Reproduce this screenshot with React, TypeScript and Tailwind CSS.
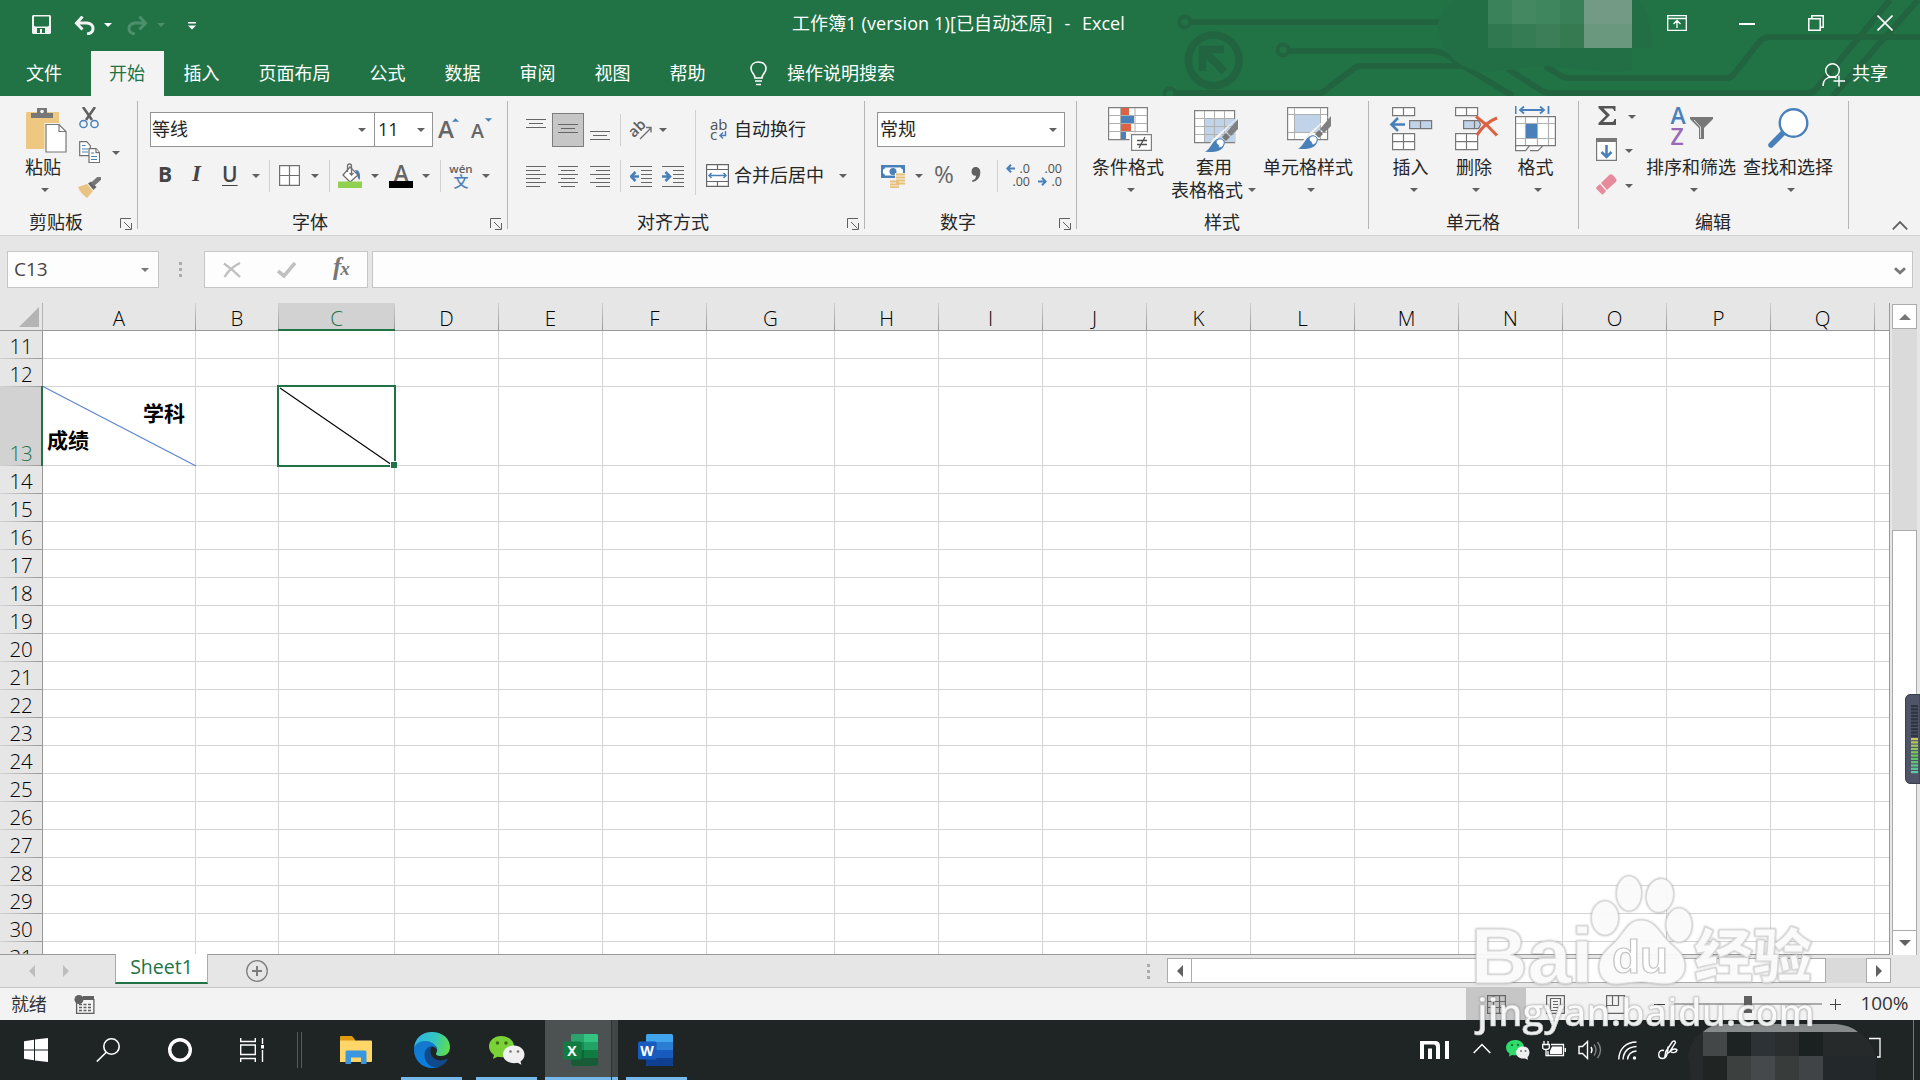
import type { ReactNode } from "react";
import clsx from "clsx";

const columns = [
  { name: "A", cls: "w-[153px]" },
  { name: "B", cls: "w-[83px]" },
  { name: "C", cls: "w-[116px]" },
  { name: "D", cls: "w-[104px]" },
  { name: "E", cls: "w-[104px]" },
  { name: "F", cls: "w-[104px]" },
  { name: "G", cls: "w-[128px]" },
  { name: "H", cls: "w-[104px]" },
  { name: "I", cls: "w-[104px]" },
  { name: "J", cls: "w-[104px]" },
  { name: "K", cls: "w-[104px]" },
  { name: "L", cls: "w-[104px]" },
  { name: "M", cls: "w-[104px]" },
  { name: "N", cls: "w-[104px]" },
  { name: "O", cls: "w-[104px]" },
  { name: "P", cls: "w-[104px]" },
  { name: "Q", cls: "w-[104px]" },
];

const rows = Array.from({ length: 21 }, (_, i) => i + 11);

const tabs = ["插入", "页面布局", "公式", "数据", "审阅", "视图", "帮助"];

function Caret({ className }: { className?: string }) {
  return (
    <svg viewBox="0 0 8 4" className={clsx("h-1 w-2 shrink-0 fill-current", className ?? "text-[#606060]")}>
      <path d="M0 0h8L4 4z" />
    </svg>
  );
}

function Launcher() {
  return (
    <svg viewBox="0 0 12 12" className="h-3 w-3 shrink-0" fill="none" stroke="#606060">
      <path d="M.5 10V.5H11M4 4l6.5 6.5M11.5 5v6.5H5" />
    </svg>
  );
}

function Divider({ className }: { className?: string }) {
  return <span className={clsx("w-px shrink-0 bg-[#d0d0d0]", className)} />;
}

/* ---------- Title bar and tabs ---------- */

function Circuit() {
  return (
    <svg viewBox="0 0 800 96" className="absolute top-0 right-0 h-24 w-[800px]" fill="none">
      <g stroke="#226440" strokeWidth="6">
        <path d="M71 22h260" />
        <path d="M169 51h143c14 0 22 10 36 18l45 27" />
        <path d="M57 93h142c4 0 6-2 9-5l24-18q5-4 9-4h132c11 0 14 2 21 7l28 18q4 2 8 2h259q4 0 7-4L770 0" />
        <path d="M425 66l18 11q3 1 6 1h157q5 0 8-4l26-33q4-4 9-4h151" />
        <path d="M713 96L798 0" />
      </g>
      <g stroke="#226440">
        <circle cx="64.700" cy="22" r="5.500" strokeWidth="4" />
        <circle cx="163" cy="50" r="5.500" strokeWidth="4" />
        <circle cx="50" cy="94" r="5.500" strokeWidth="4" />
        <circle cx="93.700" cy="60.300" r="25.400" strokeWidth="7.500" />
        <path d="M104 49.500H82.500V71M84 51l20.500 20.500" strokeWidth="7.500" />
      </g>
      <path d="M318 24c2-10 8-18 16-24h184c10 8 16 30 13 48h-19v22c-20 4-50-1-72-3-30-4-40 3-62 4-30 5-60-14-60-47z" fill="#226f45" />
      <path d="M368 0h24v24h-24z" fill="#3a835a" />
      <path d="M392 0h24v24h-24z" fill="#438860" />
      <path d="M416 0h24v24h-24z" fill="#3f855d" />
      <path d="M440 0h24v24h-24z" fill="#397f57" />
      <path d="M368 24h24v24h-24z" fill="#2f7850" />
      <path d="M392 24h24v24h-24z" fill="#357b54" />
      <path d="M416 24h24v24h-24z" fill="#3b7e58" />
      <path d="M440 24h24v24h-24z" fill="#357a50" />
      <path d="M464 0h48v24h-48z" fill="#739a84" />
      <path d="M464 24h48v24h-48z" fill="#69987f" />
    </svg>
  );
}

function TitleBar() {
  return (
    <div className="relative flex h-[51px] items-start text-white">
      <svg viewBox="0 0 19 19" className="mt-[15px] ml-8 h-[19px] w-[19px]">
        <path fill="#f2f2f2" fillRule="evenodd" d="M0 1l1-1h17l1 1v17l-1 1H1l-1-1zM2 1.500v9l1 1h13l1-1v-9zM5 13v5h3v-4h2v4h3v-5z" />
      </svg>
      <svg viewBox="0 0 21 19" className="mt-4 ml-[23px] h-[19px] w-[21px]" fill="none" stroke="#f2f2f2" strokeWidth="3">
        <path d="M8.500 .500L2.500 7.200l6 6.300M2.500 7H13c8 1 8 10 0 11" />
      </svg>
      <Caret className="mt-[23px] ml-[9px] text-white" />
      <svg viewBox="0 0 21 19" className="mt-4 ml-[15px] h-[19px] w-[21px]" fill="none" stroke="#4c8f6b" strokeWidth="3">
        <path d="M12.500 .500l6 6.700-6 6.300M18.500 7H8C0 8 0 17 8 18" />
      </svg>
      <Caret className="mt-[23px] ml-[9px] text-[#4c8f6b]" />
      <svg viewBox="0 0 8 8" className="mt-[22px] ml-[23px] h-2 w-2" fill="#fff">
        <path d="M0 0h8v1.500H0zM0 3.500h8l-4 4z" />
      </svg>
      <div className="mt-[10px] ml-[596px] flex w-[335px] text-[18px] leading-[27px] whitespace-pre">
        <span className="w-[261px] tracking-[0.12px]">工作簿1 (version 1)[已自动还原]</span>
        <span className="w-[29px] text-center">-</span>
        <span>Excel</span>
      </div>
      <svg viewBox="0 0 20 16" className="mt-[15px] ml-[540px] h-4 w-5" fill="none" stroke="#fff" strokeWidth="1.300">
        <path d="M.7.700h18.600v14.600H.7zM.7 3.500h18.600M10 13V6M6.500 9L10 5.500 13.500 9" />
      </svg>
      <span className="mt-[23px] ml-[52px] h-[2px] w-4 bg-white" />
      <svg viewBox="0 0 16 16" className="mt-[15px] ml-[53px] h-4 w-4" fill="none" stroke="#fff" strokeWidth="1.500">
        <path d="M.8 3.800h11.400v11.400H.8zM3.800 3.500V.8h11.400v11.400h-3" />
      </svg>
      <svg viewBox="0 0 16 16" className="mt-[15px] ml-[53px] h-4 w-4" fill="none" stroke="#fff" strokeWidth="1.600">
        <path d="M.5.500l15 15M15.500.500l-15 15" />
      </svg>
    </div>
  );
}

function TabStrip() {
  return (
    <div className="relative flex h-[45px] items-center pb-px text-[18px] text-white">
      <span className="w-[91px] pl-[26px]">文件</span>
      <span className="-mb-px flex h-[45px] w-[73px] items-center justify-center bg-[#f3f3f3] pr-px pb-px text-[#217346]">开始</span>
      {tabs.map((tab) => (
        <span key={tab} className="px-[19.5px]">
          {tab}
        </span>
      ))}
      <svg viewBox="0 0 17 25" className="ml-[25px] h-[25px] w-[17px]" fill="none" stroke="#fff" strokeWidth="1.600">
        <path d="M5 17c0-4-4-5-4-9.500C1 3.500 4 1 8.500 1S16 3.500 16 7.500c0 4.500-4 5.500-4 9.500zM5 20h7M6 23.500h5" />
      </svg>
      <span className="ml-5">操作说明搜索</span>
      <svg viewBox="0 0 23 24" className="mt-1 ml-[927px] h-6 w-[23px]" fill="none" stroke="#fff" strokeWidth="1.400">
        <circle cx="10.500" cy="7.500" r="6.800" />
        <path d="M1 23c0-6 4-9 9.500-9 2 0 3 .500 4 1M17 12.500v11M11.500 18H23" />
      </svg>
      <span className="ml-[7px]">共享</span>
    </div>
  );
}

/* ---------- Ribbon ---------- */

function Group({ className, label, labelClass, launcher, children }: {
  className: string;
  label: string;
  labelClass: string;
  launcher?: boolean;
  children: ReactNode;
}) {
  return (
    <section className={clsx("flex h-full shrink-0", className)}>
      <div className="flex min-w-0 flex-1 flex-col">
        <div className="flex h-[112px] items-start">{children}</div>
        <div className="flex h-[27px] items-start">
          <span className={clsx("leading-[28px]", labelClass)}>{label}</span>
          {launcher && (
            <span className="mt-[10px] mr-[5px] ml-auto">
              <Launcher />
            </span>
          )}
        </div>
      </div>
      <span className="mt-[5px] h-32 w-px bg-[#b5b5b5]" />
    </section>
  );
}

function BigButton({ className, icon, label, caretClass, labelClass }: {
  className: string;
  icon: ReactNode;
  label: string;
  caretClass?: string;
  labelClass?: string;
}) {
  return (
    <div className={clsx("flex shrink-0 flex-col items-center", className)}>
      <div className="flex h-12 items-start">{icon}</div>
      <span className={clsx("leading-6 whitespace-nowrap", labelClass)}>{label}</span>
      <span className={clsx("mt-[9px] flex", caretClass)}>
        <Caret />
      </span>
    </div>
  );
}

function Clipboard() {
  return (
    <Group className="w-[138px]" label="剪贴板" labelClass="ml-[29px]" launcher>
      <BigButton
        className="mt-[11px] ml-[25px] w-[42px]"
        label="粘贴"
        labelClass="mr-[6px]"
        caretClass="mr-[2px]"
        icon={
          <svg viewBox="0 0 42 46" className="h-[46px] w-[42px]">
            <rect x="1" y="5" width="33" height="37" rx="1" fill="#eec880" />
            <path d="M6 11V6h6V1h10v5h6v5z" fill="#777" />
            <circle cx="17" cy="4.500" r="1.800" fill="#f3f3f3" />
            <path d="M19.500 16h15l7.500 7.500V46H19.500z" fill="#f3f3f3" />
            <path d="M21 17.500h13l7 7V45H21z" fill="#fff" stroke="#777" strokeWidth="1.200" />
            <path d="M34 17.500v7h7" fill="none" stroke="#777" strokeWidth="1.200" />
          </svg>
        }
      />
      <div className="mt-[11px] ml-3 flex flex-col">
        <svg viewBox="0 0 20 22" className="h-[22px] w-5" fill="none">
          <path d="M4 0l9 13M16 0L7 13" stroke="#606060" strokeWidth="2.600" />
          <circle cx="4.500" cy="17" r="3.600" stroke="#4a80ba" strokeWidth="1.500" />
          <circle cx="15.500" cy="17" r="3.600" stroke="#4a80ba" strokeWidth="1.500" />
        </svg>
        <div className="mt-3 flex items-center">
          <svg viewBox="0 0 21 22" className="h-[22px] w-[21px]" fill="#fff" stroke="#707070" strokeWidth="1.200">
            <path d="M.7.700h7l3.600 4v10H.7z" />
            <path d="M3 4.500h3.500M3 8h6M3 11h6" stroke="#4a80ba" />
            <path d="M10 7.700h7l3.600 4v10H10z" />
            <path d="M17 7.700v4h3.600" />
            <path d="M12 12h3M12 15.500h6M12 18.500h6" stroke="#4a80ba" />
          </svg>
          <Caret className="mt-[2px] ml-[12px] text-[#606060]" />
        </div>
        <svg viewBox="0 0 24 21" className="mt-[14px] -ml-[2px] h-[21px] w-6">
          <path d="M1 10l9-3 6 7-6 7C6 18 3 15 1 10z" fill="#e9c382" />
          <path d="M11 6.500l3-2 5.500 5.500-3 3z" fill="#666" />
          <path d="M17 6l5-4.500" stroke="#777" strokeWidth="4.500" strokeLinecap="round" />
        </svg>
      </div>
    </Group>
  );
}

function FontGroup() {
  return (
    <Group className="w-[370px]" label="字体" labelClass="ml-[154px]" launcher>
      <div className="flex flex-col">
        <div className="mt-4 ml-3 flex h-[35px] items-start">
          <div className="flex h-[35px] w-[225px] items-center justify-between border border-[#939393] bg-white pr-2 pl-px text-[18px]">
            <span className="leading-[27px]">等线</span>
            <Caret />
          </div>
          <div className="-ml-px flex h-[35px] w-[59px] items-center justify-between border border-[#939393] bg-white pr-[7px] pl-[3px] text-[18px]">
            <span>11</span>
            <Caret />
          </div>
          <span className="mt-[5px] ml-[5px] w-4 text-[24px] leading-6 font-semibold text-[#666]">A</span>
          <svg viewBox="0 0 8 4" className="mt-[6px] -ml-[2px] h-1 w-[7px]" fill="#4a80ba"><path d="M0 4h8L4 0z" /></svg>
          <span className="mt-[7px] ml-[12px] w-[13px] text-[19.5px] leading-6 font-semibold text-[#666]">A</span>
          <svg viewBox="0 0 8 4" className="mt-[6px] ml-px h-1 w-[7px]" fill="#4a80ba"><path d="M0 0h8L4 4z" /></svg>
        </div>
        <div className="mt-[13px] flex h-8 items-center pl-[20px] text-[21px] text-[#444]">
          <span className="-mt-[3px] w-8 font-bold">B</span>
          <span className="-mt-[3px] w-8 pl-[2px] font-['Liberation_Serif',serif] text-[23px] font-bold italic">I</span>
          <span className="-mt-[3px] w-[15px] font-semibold underline decoration-1 underline-offset-[3px]">U</span>
          <Caret className="ml-[15px] text-[#606060]" />
          <Divider className="ml-[9px] h-8" />
          <svg viewBox="0 0 21 21" className="-mt-[2px] ml-[9px] h-[21px] w-[21px]" fill="#fff" stroke="#707070" strokeWidth="1.200">
            <path d="M.6.600h19.800v19.800H.6zM10.500.600v19.800M.6 10.500h19.800" />
          </svg>
          <Caret className="ml-[11px] text-[#606060]" />
          <Divider className="ml-[10px] h-8" />
          <svg viewBox="0 0 24 25" className="-mt-px ml-2 h-[25px] w-6">
            <path d="M17 7c5-1 6 6 4.500 10-2-1-2-6-4.500-10z" fill="#4a80ba" />
            <path d="M12 4l8 8-8 7-7-7z" fill="#fff" stroke="#707070" strokeWidth="1.300" />
            <path d="M9.500 9V3q0-2 2-2t2 2v8M11.500 10l2 2 2-2" fill="none" stroke="#707070" strokeWidth="1.300" />
            <path d="M0 18.500h24V25H0z" fill="#92d050" />
          </svg>
          <Caret className="ml-[9px] text-[#606060]" />
          <span className="-mt-[1px] ml-[10px] flex h-[25px] w-6 flex-col items-center text-[23px] leading-[21px] font-semibold text-[#666]">
            <span className="h-[18px]">A</span>
            <span className="h-[7px] w-6 shrink-0 bg-black" />
          </span>
          <Caret className="ml-[9px] text-[#606060]" />
          <Divider className="ml-[10px] h-8" />
          <span className="-mt-[2px] ml-[10px] flex w-5 flex-col items-center leading-[13px]">
            <span className="text-[11.5px] leading-[11px] font-semibold text-[#606060]">wén</span>
            <span className="text-[15px] leading-[14px] font-medium text-[#4a80ba]">文</span>
          </span>
          <Caret className="ml-[11px] text-[#606060]" />
        </div>
      </div>
    </Group>
  );
}

function Lines({ className, d }: { className?: string; d: string }) {
  return (
    <svg viewBox="0 0 20 22" className={clsx("h-[22px] w-5 shrink-0", className)} stroke="#666" strokeWidth="1.100">
      <path d={d} />
    </svg>
  );
}

function AlignmentGroup() {
  return (
    <Group className="w-[357px]" label="对齐方式" labelClass="ml-[129px]" launcher>
      <div className="mt-4 ml-[12px] flex w-[176px] flex-col">
        <div className="flex h-[35px] items-center">
          <Lines className="ml-[6px]" d="M0 .500h20M3 4.500h14M0 8.500h20" />
          <span className="ml-[6px] flex h-[34px] w-8 items-center justify-center border border-[#7d7d7d] bg-[#c6c6c6]">
            <Lines d="M0 5.500h20M3 9.500h14M0 13.500h20" />
          </span>
          <Lines className="ml-[6px]" d="M0 12.500h20M3 16.500h14M0 20.500h20" />
          <Divider className="ml-[10px] h-8" />
          <svg viewBox="0 0 22 22" className="ml-[10px] h-[22px] w-[22px] overflow-visible">
            <text x="-2" y="13" transform="rotate(-45 8 10)" fontSize="15" fontWeight="600" fill="#606060">ab</text>
            <path d="M9 20L20 9M20 13.500V8.500h-5" fill="none" stroke="#707070" strokeWidth="1.400" />
          </svg>
          <Caret className="ml-[6px] text-[#606060]" />
        </div>
        <div className="mt-[13px] flex h-8 items-center">
          <Lines className="-mt-[1px] ml-[6px]" d="M0 1.500h20M0 5.500h14M0 9.500h20M0 13.500h14M0 17.500h20M0 21.500h14" />
          <Lines className="-mt-[1px] ml-3" d="M0 1.500h20M3 5.500h14M0 9.500h20M3 13.500h14M0 17.500h20M3 21.500h14" />
          <Lines className="-mt-[1px] ml-3" d="M0 1.500h20M6 5.500h14M0 9.500h20M6 13.500h14M0 17.500h20M6 21.500h14" />
          <Divider className="ml-[10px] h-8" />
          <svg viewBox="0 0 22 22" className="-mt-[1px] ml-[9px] h-[22px] w-[22px]" fill="none" stroke="#666" strokeWidth="1.100">
            <path d="M0 1.500h22M11 5.500h11M11 9.500h11M11 13.500h11M11 17.500h11M0 21.500h22" />
            <path d="M9 11.500H2M5.500 7L1 11.500 5.500 16" stroke="#4a80ba" strokeWidth="2.600" />
          </svg>
          <svg viewBox="0 0 22 22" className="-mt-[1px] ml-[10px] h-[22px] w-[22px]" fill="none" stroke="#666" strokeWidth="1.100">
            <path d="M0 1.500h22M11 5.500h11M11 9.500h11M11 13.500h11M11 17.500h11M0 21.500h22" />
            <path d="M0 11.500h7M3.500 7L8 11.500 3.500 16" stroke="#4a80ba" strokeWidth="2.600" />
          </svg>
        </div>
      </div>
      <Divider className="mt-[14px] -ml-[1px] h-[85px]" />
      <div className="mt-4 ml-[10px] flex flex-col">
        <div className="flex h-[35px] items-center">
          <svg viewBox="0 0 20 24" className="ml-[3px] h-6 w-5">
            <text x="1" y="11.5" fontSize="15" fill="#505050">ab</text>
            <text x="1" y="21.5" fontSize="15" fill="#505050">c</text>
            <path d="M16.500 13v4.500h-5M14 14.500l-3 3 3 3" fill="none" stroke="#4a80ba" strokeWidth="1.500" />
          </svg>
          <span className="ml-[5px]">自动换行</span>
        </div>
        <div className="mt-[13px] flex h-8 items-center">
          <svg viewBox="0 0 23 23" className="-mt-[2px] h-[23px] w-[23px]" fill="#fff" stroke="#666" strokeWidth="1.200">
            <path d="M.6.600h21.800v21.800H.6zM.6 5.500h21.800M.6 17.500h21.800M11.500.600v5M11.500 17.500v5" />
            <path d="M3 11.500h17M5.500 9L3 11.500 5.500 14M17.500 9l2.500 2.500-2.500 2.500" fill="none" stroke="#4a80ba" strokeWidth="1.500" />
          </svg>
          <span className="-mt-px ml-[5px]">合并后居中</span>
          <Caret className="ml-[15px] text-[#606060]" />
        </div>
      </div>
    </Group>
  );
}

function NumberGroup() {
  return (
    <Group className="w-[212px]" label="数字" labelClass="ml-[75px]" launcher>
      <div className="flex flex-col">
        <div className="mt-4 ml-3 flex h-[35px] w-[188px] items-center justify-between border border-[#939393] bg-white pr-[7px] pl-[2px]">
          <span className="leading-[27px]">常规</span>
          <Caret />
        </div>
        <div className="mt-[13px] flex h-8 items-center pl-4">
          <svg viewBox="0 0 24 24" className="h-6 w-6">
            <path d="M0 1h24v13H0z" fill="#4a80ba" />
            <path d="M4 3.500h16q0 2 2 2v4q-2 0-2 2H4q0-2-2-2v-4q2 0 2-2z" fill="#fff" />
            <circle cx="12" cy="7.500" r="3.500" fill="#4a80ba" />
            <path d="M14 9h10v12H14zM8 16h9v7H8z" fill="#f3f3f3" />
            <path d="M15 10.500h9M15 13.500h9M15 16.500h9M15 19.500h9M9 17.500h9M9 20.500h9M9 23.200h9" stroke="#e9c07a" strokeWidth="2" />
          </svg>
          <Caret className="ml-[10px] text-[#606060]" />
          <span className="-mt-1 ml-[11px] w-[22px] text-[24px] text-[#666]">%</span>
          <svg viewBox="0 0 10 15" className="-mt-[3px] ml-[15px] h-[15px] w-[10px]" fill="#606060">
            <path d="M4.500 0C8 0 9.500 2.500 9.300 6 9 11 6 14 1.500 15l-.5-1.500C4 12.500 5 11 5 8.700 2 9 .500 7 .500 4.500.500 2 2.300 0 4.500 0z" />
          </svg>
          <Divider className="ml-[16px] h-8" />
          <span className="-mt-[2px] ml-[8px] flex w-6 flex-col text-right text-[12.5px] leading-[13px] font-medium text-[#505050]">
            <span className="flex items-center justify-between">
              <svg viewBox="0 0 9 9" className="h-[9px] w-[9px]" fill="none" stroke="#4a80ba" strokeWidth="2"><path d="M9 4.500H1.500M5 .800L1.300 4.500 5 8.200" /></svg>
              .0
            </span>
            <span>.00</span>
          </span>
          <span className="-mt-[2px] ml-2 flex w-6 flex-col text-right text-[12.5px] leading-[13px] font-medium text-[#505050]">
            <span>.00</span>
            <span className="flex items-center justify-between">
              <svg viewBox="0 0 9 9" className="h-[9px] w-[9px]" fill="none" stroke="#4a80ba" strokeWidth="2"><path d="M0 4.500h7.500M4 .800l3.700 3.700L4 8.200" /></svg>
              .0
            </span>
          </span>
        </div>
      </div>
    </Group>
  );
}

function Brush() {
  return (
    <g>
      <path d="M43 9L24 29l-8 13-6 1 10-14z" fill="#f3f3f3" />
      <path d="M11 42.500c6-2 7-12 14-13 5 0 7 5 4 9-4 5-12 5-18 4z" fill="#4a80ba" />
      <path d="M22 34c0-4 5-6 8-2 1 4-2 7-5 7 0-2-1-4-3-5z" fill="#fff" stroke="#4a80ba" />
      <path d="M28 28l4-4 4 4-4 4z" fill="#777" />
      <path d="M33 23l11-13v10l-7 7z" fill="#808080" />
    </g>
  );
}

function StylesGroup() {
  return (
    <Group className="w-[292px]" label="样式" labelClass="ml-[127px]">
      <BigButton
        className="mt-[11px] ml-[15px] w-[72px]"
        label="条件格式"
        caretClass="ml-[6px]"
        icon={
          <svg viewBox="0 0 44 44" className="ml-1 h-11 w-11">
            <path d="M.6.600h38.800v32H.6z" fill="#fff" stroke="#808080" strokeWidth="1.200" />
            <path d="M12.500 1v31M27 1v31M1 8.500h38M1 16.500h38M1 24.500h38" stroke="#b0b0b0" fill="none" />
            <path d="M13 1h8v7h-8zM13 17h10v7H13z" fill="#db6245" />
            <path d="M13 9h13v7H13zM13 25h5v7h-5z" fill="#4a80ba" />
            <path d="M21.500 25.500H44V44H21.500z" fill="#f3f3f3" />
            <path d="M23.600 27.600h19.800v15.800H23.600z" fill="#fff" stroke="#808080" strokeWidth="1.200" />
            <path d="M29 33.500h10M29 37.500h10M37 30l-6 11" stroke="#505050" strokeWidth="1.300" />
          </svg>
        }
      />
      <div className="mt-[11px] ml-[7px] flex w-[88px] flex-col">
        <svg viewBox="0 0 45 48" className="ml-[23px] h-12 w-[45px]">
          <path d="M.6 3.600h40v32H.6z" fill="#fff" stroke="#808080" strokeWidth="1.200" />
          <path d="M11 12h30v23H11z" fill="#c0d3e9" />
          <path d="M10.500 4v31M20.500 4v31M30.500 4v31M1 11.500h39M1 19.500h39M1 27.500h39" stroke="#b0b0b0" fill="none" />
          <g transform="translate(0 2)"><Brush /></g>
        </svg>
        <span className="ml-[25px] leading-6">套用</span>
        <span className="mt-[-1px] flex items-center leading-6 whitespace-nowrap">
          表格格式
          <Caret className="ml-[5px] text-[#606060]" />
        </span>
      </div>
      <BigButton
        className="mt-[11px] ml-[4px] w-[90px]"
        label="单元格样式"
        caretClass="ml-[6px]"
        icon={
          <svg viewBox="0 0 45 45" className="ml-[3px] h-[45px] w-[45px]">
            <path d="M.6.600h40v32H.6z" fill="#fff" stroke="#808080" strokeWidth="1.200" />
            <path d="M8 8h25v18H8z" fill="#c0d3e9" />
            <path d="M7.500 1v31M33.500 1v31M1 7.500h39M1 25.500h39" stroke="#b0b0b0" fill="none" />
            <g transform="translate(0 -1)"><Brush /></g>
          </svg>
        }
      />
    </Group>
  );
}

function CellsGroup() {
  return (
    <Group className="w-[210px]" label="单元格" labelClass="ml-[77px]">
      <BigButton
        className="mt-[11px] ml-[20px] w-[44px]"
        label="插入"
        labelClass="mr-px"
        caretClass="ml-[5px]"
        icon={
          <svg viewBox="0 0 44 44" className="h-11 w-11" fill="#fff" stroke="#777" strokeWidth="1.200">
            <path d="M3.600.600h22v8h-22zM14.500.600v8M3.600 26.600h22v16h-22zM14.500 26.600v16M3.600 34.600h22" />
            <path d="M20.600 13.600h22v8h-22zM31.500 13.600v8" fill="#c0d3e9" />
            <path d="M16 17.500H2M9 11l-6.500 6.500L9 24" fill="none" stroke="#4a80ba" strokeWidth="2.600" />
          </svg>
        }
      />
      <BigButton
        className="mt-[11px] ml-[22px] w-[44px]"
        label="删除"
        labelClass="mr-[6px]"
        caretClass="mr-[2px]"
        icon={
          <svg viewBox="0 0 44 44" className="h-11 w-11" fill="#fff" stroke="#777" strokeWidth="1.200">
            <path d="M.6.600h22v8h-22zM11.500.600v8M.6 26.600h22v16h-22zM11.500 26.600v16M.6 34.600h22" />
            <path d="M8.600 13.600h15l2 4-2 4h-15zM19.500 13.600v8" fill="#c0d3e9" />
            <path d="M21 9.500c7 5 14 11 21 19M42 11c-8 3-15 9-20 17" fill="none" stroke="#db6245" strokeWidth="3.200" />
          </svg>
        }
      />
      <BigButton
        className="mt-[10px] ml-[16px] w-[41px]"
        label="格式"
        labelClass="mt-px"
        caretClass="ml-[5px]"
        icon={
          <svg viewBox="0 0 41 46" className="h-[46px] w-[41px]" fill="#fff" stroke="#777" strokeWidth="1.200">
            <path d="M.6 10.600h39.800v29H.6zM.6 39.600v5h10l4-5M15 44.600h8l5-5" />
            <path d="M10.500 11v28M22.500 11v28M33.500 11v28M1 17.500h39M1 32.500h39" stroke="#b0b0b0" />
            <path d="M11 18h11v14H11z" fill="#4a80ba" stroke="none" />
            <path d="M.6 0v8M33.500 0v8M5 4h24M9 .500L5 4l4 3.500M25 .500L29 4l-4 3.500" fill="none" stroke="#4a80ba" strokeWidth="1.800" />
          </svg>
        }
      />
    </Group>
  );
}

function EditingGroup() {
  return (
    <Group className="w-[270px]" label="编辑" labelClass="ml-[116px]">
      <div className="mt-[10px] ml-[17px] flex w-[41px] flex-col">
        <div className="flex items-center">
          <svg viewBox="0 0 18 19" className="ml-[2px] h-[19px] w-[18px]" fill="#555">
            <path d="M.5 0h17v5h-1.500c-.3-2-1-2.500-3-2.500H5.500L12 9l-7 7h8c2 0 3-.5 3.500-3H18v6H.5v-2L8 9.500.500 2z" />
          </svg>
          <Caret className="mt-[3px] ml-[12px] text-[#606060]" />
        </div>
        <div className="mt-[13px] flex items-center">
          <svg viewBox="0 0 21 23" className="h-[23px] w-[21px]">
            <path d="M.6.600h19.800v21.800H.6z" fill="#fff" stroke="#777" strokeWidth="1.200" />
            <path d="M0 0h21v4H0z" fill="#777" />
            <path d="M10.500 7v12M5.500 14l5 5 5-5" fill="none" stroke="#4a80ba" strokeWidth="2.600" />
          </svg>
          <Caret className="mt-[3px] ml-2 text-[#606060]" />
        </div>
        <div className="mt-[13px] flex items-center">
          <svg viewBox="0 0 21 21" className="h-[21px] w-[21px]" fill="#e68a9c">
            <path d="M13.500.800q1.500-1.200 3 0l3.500 4q1 1.500 0 3L11 16 5 9zM4 10l6 7-2.500 3q-1 .800-2 0l-5-5q-.8-1.200 0-2z" />
          </svg>
          <Caret className="mt-[2px] ml-2 text-[#606060]" />
        </div>
      </div>
      <BigButton
        className="mt-[11px] ml-[9px] w-[90px]"
        label="排序和筛选"
        caretClass="ml-[6px]"
        icon={
          <svg viewBox="0 0 42 44" className="ml-[2px] h-11 w-[42px] overflow-visible">
            <text x="-.5" y="17" fontSize="23" fontWeight="600" fill="#4a80ba">A</text>
            <text x="-.5" y="38" fontSize="23" fontWeight="600" fill="#9a68b8">Z</text>
            <path d="M19 10h23v2l-9 9v11h-5V21l-9-9z" fill="#777" />
            <path d="M23 13l6.500 7v11" stroke="#ddd" fill="none" />
          </svg>
        }
      />
      <BigButton
        className="mt-[11px] ml-[7px] w-[90px]"
        label="查找和选择"
        caretClass="ml-[6px]"
        icon={
          <svg viewBox="0 0 41 42" className="h-[42px] w-[41px]">
            <path d="M3 38l14-14" stroke="#4a80ba" strokeWidth="5.500" strokeLinecap="round" />
            <circle cx="25.500" cy="16" r="13.800" fill="#fff" stroke="#4a80ba" strokeWidth="2.400" />
          </svg>
        }
      />
    </Group>
  );
}

function Ribbon() {
  return (
    <div className="flex h-[140px] border-b border-[#d2d2d2] bg-[#f3f3f3] text-[18px] text-[#262626]">
      <Clipboard />
      <FontGroup />
      <AlignmentGroup />
      <NumberGroup />
      <StylesGroup />
      <CellsGroup />
      <EditingGroup />
      <svg viewBox="0 0 16 9" className="mt-[125px] ml-[43px] h-[9px] w-4" fill="none" stroke="#606060" strokeWidth="1.800">
        <path d="M.8 8.300L8 1l7.200 7.300" />
      </svg>
    </div>
  );
}

/* ---------- Formula bar ---------- */

function FormulaBar() {
  return (
    <div className="flex h-[67px] items-start pt-[15px] pl-[7px]">
      <div className="flex h-[37px] w-[152px] items-center justify-between border border-[#c6c6c6] bg-[#fdfdfd] pr-[9px] pl-[6px] text-[19px] text-[#444]">
        <span>C13</span>
        <Caret className="text-[#777]" />
      </div>
      <div className="mt-[11px] ml-5 flex flex-col gap-[3px]">
        <span className="h-[3px] w-[3px] bg-[#ababab]" />
        <span className="h-[3px] w-[3px] bg-[#ababab]" />
        <span className="h-[3px] w-[3px] bg-[#ababab]" />
      </div>
      <div className="ml-[22px] flex h-[37px] w-[164px] items-center border border-[#c6c6c6] bg-[#fdfdfd]">
        <svg viewBox="0 0 18 16" className="ml-[18px] h-4 w-[18px]" fill="none" stroke="#c0c0c0" strokeWidth="2.400">
          <path d="M1 1.500C6 5 12 10 17 15M17 1C11 4 5 9 1.500 15" />
        </svg>
        <svg viewBox="0 0 19 16" className="ml-[36px] h-4 w-[19px]" fill="none" stroke="#c0c0c0" strokeWidth="3.600">
          <path d="M1 9l6 5L18 1" />
        </svg>
        <span className="-mt-[3px] ml-[37px] font-['Liberation_Serif',serif] text-[25px] leading-7 font-bold tracking-[-1px] text-[#777] italic">
          f<span className="text-[19px]">x</span>
        </span>
      </div>
      <div className="ml-1 flex h-[37px] w-[1541px] items-center justify-end border border-[#c6c6c6] bg-[#fdfdfd] pr-[6px]">
        <svg viewBox="0 0 12 8" className="mt-[2px] h-2 w-3" fill="none" stroke="#777" strokeWidth="2.800">
          <path d="M1 1.200l5 4.600 5-4.600" />
        </svg>
      </div>
    </div>
  );
}

/* ---------- Sheet ---------- */

function Sheet() {
  return (
    <div className="relative h-[652px] w-[1890px] overflow-hidden border-r border-b border-[#999] bg-white text-[20.5px] font-[350] text-black">
      <div className="flex h-7 border-b border-[#999] bg-[#e6e6e6]">
        <div className="flex w-[43px] items-end justify-end border-r border-[#b5b5b5] pr-[3px] pb-[3px]">
          <svg viewBox="0 0 20 20" className="h-5 w-5" fill="#b4b4b4">
            <path d="M20 0v20H0z" />
          </svg>
        </div>
        {columns.map((col) => (
          <div
            key={col.name}
            className={clsx("flex shrink-0", col.cls, col.name === "C" && "bg-[#d2d2d2] text-[#217346]")}
          >
            <span className="flex-1 text-center leading-[31px]">{col.name}</span>
            <span className="w-px bg-linear-to-b from-[#d0d0d0] to-[#999]" />
          </div>
        ))}
      </div>
      {rows.map((row) => (
        <div key={row} className={clsx("flex", row === 13 ? "h-[79px]" : "h-7")}>
          <div
            className={clsx(
              "flex w-[43px] shrink-0 flex-col justify-end border-r",
              row === 13 ? "border-[#217346] bg-[#d2d2d2] text-[#217346]" : "border-[#999] bg-[#e6e6e6]"
            )}
          >
            <span className="h-[27px] text-center leading-[31px] tracking-[-0.3px]">{row}</span>
            <span className="h-px bg-linear-to-r from-[#d4d4d4] to-[#999]" />
          </div>
          {columns.map((col) => (
            <div key={col.name} className={clsx("shrink-0 border-r border-b border-[#d4d4d4]", col.cls)}>
              {row === 13 && col.name === "A" && (
                <div className="flex flex-col pt-[12px] text-[21px] leading-7 font-bold">
                  <span className="pl-[100px]">学科</span>
                  <span className="-mt-px pl-1">成绩</span>
                </div>
              )}
            </div>
          ))}
          <div className="flex-1 border-b border-[#d4d4d4]" />
        </div>
      ))}

      {/* selected cell and diagonal borders */}
      <svg viewBox="0 0 400 90" className="absolute top-[80px] left-0 h-[90px] w-[400px]" fill="none">
        <path d="M43 3.500L196 83" stroke="#5b84d0" strokeWidth="1.200" />
        <path d="M280 5l112 77" stroke="#000" strokeWidth="1.100" />
      </svg>
      <span className="absolute top-[83px] left-[41px] h-20 w-[2px] bg-[#217346]" />
      <span className="absolute top-[26px] left-[278px] h-[2px] w-[117px] bg-[#217346]" />
      <div className="absolute top-[82px] left-[277px] h-[82px] w-[119px] border-2 border-[#217346]" />
      <span className="absolute top-[158px] left-[390px] h-[7px] w-[7px] border-t border-l border-white bg-[#217346]" />
    </div>
  );
}

function VerticalScroll() {
  return (
    <div className="mt-px ml-[2px] flex h-[652px] w-[25px] flex-col bg-[#dadada]">
      <span className="flex h-[25px] items-center justify-center border border-[#ababab] bg-white">
        <svg viewBox="0 0 12 6" className="h-[6px] w-3" fill="#777"><path d="M0 6h12L6 0z" /></svg>
      </span>
      <span className="mt-[201px] flex-1 border border-[#ababab] bg-white" />
      <span className="flex h-[25px] items-center justify-center border border-t-0 border-[#ababab] bg-white">
        <svg viewBox="0 0 12 6" className="h-[6px] w-3" fill="#606060"><path d="M0 0h12L6 6z" /></svg>
      </span>
    </div>
  );
}

function SheetTabs() {
  return (
    <div className="flex h-[33px] items-start border-b border-[#c6c6c6] bg-[#e6e6e6]">
      <svg viewBox="0 0 40 12" className="mt-[10px] ml-[29px] h-3 w-10" fill="#bdbdbd">
        <path d="M6 0v12L0 6zM34 0v12l6-6z" />
      </svg>
      <span className="relative -mt-px ml-[46px] flex h-[30px] w-[93px] items-center justify-center border-x border-b-2 border-x-[#ababab] border-b-[#217346] bg-white pb-[3px] text-[19.5px] font-medium text-[#217346]">
        Sheet1
      </span>
      <svg viewBox="0 0 22 22" className="mt-[5px] ml-[38px] h-[22px] w-[22px]" fill="none" stroke="#7d7d7d" strokeWidth="1.300">
        <circle cx="11" cy="11" r="10.300" />
        <path d="M11 6v10M6 11h10" strokeWidth="2" />
      </svg>
      <div className="mt-[9px] ml-[879px] flex flex-col gap-[3px]">
        <span className="h-[3px] w-[3px] bg-[#ababab]" />
        <span className="h-[3px] w-[3px] bg-[#ababab]" />
        <span className="h-[3px] w-[3px] bg-[#ababab]" />
      </div>
      <div className="mt-[3px] ml-[17px] flex h-[25px] w-[724px] bg-[#dadada]">
        <span className="flex w-[25px] items-center justify-center border border-[#ababab] bg-white">
          <svg viewBox="0 0 6 12" className="h-3 w-[6px]" fill="#606060"><path d="M6 0v12L0 6z" /></svg>
        </span>
        <span className="-ml-px w-[635px] border border-[#ababab] bg-white" />
        <span className="ml-auto flex w-[25px] items-center justify-center border border-[#ababab] bg-white">
          <svg viewBox="0 0 6 12" className="h-3 w-[6px]" fill="#606060"><path d="M0 0v12l6-6z" /></svg>
        </span>
      </div>
    </div>
  );
}

function StatusBar() {
  return (
    <div className="flex h-8 items-center bg-[#f3f3f3] text-[18px] text-[#333]">
      <span className="ml-[11px] tracking-[-0.3px]">就绪</span>
      <svg viewBox="0 0 21 19" className="ml-[28px] h-[19px] w-[21px]" fill="none" stroke="#606060" strokeWidth="1.300">
        <path d="M2.600 8v10.400h17.300V4" />
        <path d="M9 3h11" strokeWidth="4" />
        <path d="M5 9.500h12M5 12.500h12M5 15.500h12" strokeDasharray="3 1.500" />
        <circle cx="5" cy="4.500" r="4.500" fill="#606060" stroke="none" />
      </svg>
      <span className="ml-[1371px] flex h-full w-[60px] items-center justify-center bg-[#c6c6c6]">
        <svg viewBox="0 0 19 19" className="h-[19px] w-[19px]" fill="none" stroke="#666" strokeWidth="1.200">
          <path d="M.6.600h17.800v17.800H.6zM6.500.600v18M12.500.600v18M.6 6.500h18M.6 12.500h18" />
        </svg>
      </span>
      <svg viewBox="0 0 19 19" className="ml-5 h-[19px] w-[19px]" fill="none" stroke="#666" strokeWidth="1.200">
        <path d="M.6.600h17.800v17.800H.6zM4.500 3.500h10v12h-10zM7 6.500h5M7 9.500h5M7 12.500h5" />
      </svg>
      <svg viewBox="0 0 19 19" className="ml-[41px] h-[19px] w-[19px]" fill="none" stroke="#666" strokeWidth="1.200">
        <path d="M.6.600h17.800v17.800H.6zM6.500.600v10M12.500.600v10M.6 10.500h12" />
      </svg>
      <span className="ml-[29px] h-[1px] w-[11px] bg-[#444]" />
      <div className="ml-[9px] flex h-[17px] w-[148px] items-center">
        <span className="h-[2px] w-[70px] bg-[#ababab]" />
        <span className="h-[17px] w-2 bg-[#606060]" />
        <span className="h-[2px] flex-1 bg-[#ababab]" />
      </div>
      <svg viewBox="0 0 11 11" className="ml-2 h-[11px] w-[11px]" stroke="#444">
        <path d="M5.500 0v11M0 5.500h11" />
      </svg>
      <span className="-mt-px ml-[19px] text-[19px] tracking-[-0.1px]">100%</span>
    </div>
  );
}

/* ---------- Taskbar ---------- */

function OfficeIcon({ letter, shades, badge }: { letter: string; shades: string[]; badge: string }) {
  return (
    <svg viewBox="0 0 36 34" className="h-[34px] w-9">
      <rect x="8" y="1" width="27" height="32" rx="1.500" fill={shades[0]} />
      <path d="M8 9h27v8H8z" fill={shades[1]} />
      <path d="M8 17h27v8H8z" fill={shades[2]} />
      <path d="M8 25h27v6.500q0 1.500-1.500 1.500h-24Q8 33 8 31.500z" fill={shades[3]} />
      {letter === "X" && <path d="M8 2.500Q8 1 9.500 1H21v24H8z" fill="#000" fillOpacity=".16" />}
      <rect x="0" y="8.500" width="18.500" height="18" rx="1.500" fill={badge} />
      <text x="9" y="22.500" textAnchor="middle" fontSize="14" fontWeight="700" fill="#fff">{letter}</text>
    </svg>
  );
}

function TaskItem({ className, open, children }: { className: string; open?: boolean; children: ReactNode }) {
  return (
    <div className={clsx("flex h-[60px] shrink-0 flex-col", className)}>
      <div className="flex h-[57px] items-center justify-center pt-[3px]">{children}</div>
      {open && <span className="h-[3px] bg-[#76b9ed]" />}
    </div>
  );
}

function WeChat({ className }: { className: string }) {
  return (
    <svg viewBox="0 0 36 30" className={className}>
      <path d="M12 1C5.500 1 0 5.500 0 11.500c0 3.500 2 6.500 5 8.500l-1 4 4.500-2.300c1.500.3 2.500.5 4 .5 7 0 12.500-4.500 12.500-10.500S19.500 1 12 1z" fill="#7bd236" />
      <circle cx="8.500" cy="8" r="1.800" fill="#3f6d1c" />
      <circle cx="17" cy="8" r="1.800" fill="#3f6d1c" />
      <path d="M25 10.500c-6 0-11 4-11 9s5 8.700 11 8.700c1.300 0 2.500-.2 3.500-.5l4 2-1-3.200c2.600-1.700 4-4.200 4-7 0-5-4.500-9-10.500-9z" fill="#f0f0f0" />
      <circle cx="21.500" cy="16.500" r="1.300" fill="#777" />
      <circle cx="29" cy="16.500" r="1.300" fill="#777" />
    </svg>
  );
}

function Taskbar() {
  return (
    <div className="relative flex h-[60px] items-start bg-[#1f2525] text-white">
      <TaskItem className="w-[72px]">
        <svg viewBox="0 0 24 24" className="h-6 w-6" fill="#fff">
          <path d="M0 3.300l10-1.500v9.700H0zM11 1.600L24 0v11.500H11zM0 12.500h10v9.700L0 20.700zM11 12.500h13V24l-13-1.600z" />
        </svg>
      </TaskItem>
      <TaskItem className="w-[72px]">
        <svg viewBox="0 0 24 24" className="h-6 w-6" fill="none" stroke="#fff" strokeWidth="1.600">
          <circle cx="15.500" cy="8.500" r="7.700" />
          <path d="M10.300 14.300L.800 23.500" />
        </svg>
      </TaskItem>
      <TaskItem className="w-[72px]">
        <svg viewBox="0 0 24 24" className="h-6 w-6" fill="none" stroke="#fff" strokeWidth="3.400">
          <circle cx="12" cy="12" r="10.300" />
        </svg>
      </TaskItem>
      <TaskItem className="w-[72px]">
        <svg viewBox="0 0 24 24" className="h-6 w-6" fill="none" stroke="#fff" strokeWidth="1.400">
          <path d="M.7 0v3.500h14.600V0M.7 7h14.600v9.500H.7zM.7 24v-3.500h14.600V24M22.500 0v6M22.500 12v12" />
          <path d="M21 7h3v3.500h-3z" fill="#fff" stroke="none" />
        </svg>
      </TaskItem>
      <span className="mt-3 ml-[9px] h-9 w-[5px] border-x border-[#555a5a]" />
      <TaskItem className="ml-[18px] w-[72px]">
        <svg viewBox="0 0 32 28" className="-ml-px h-7 w-8">
          <path d="M0 1q0-1 1-1h11l3 3.500V8H0z" fill="#e09a12" />
          <path d="M0 4.500h31q1 0 1 1V25q0 1-1 1H0z" fill="#ffd667" />
          <path d="M5.500 28V16q0-1.500 1.500-1.500h18q1.500 0 1.500 1.500v12H21v-6.500H11V28z" fill="#3a96dd" />
        </svg>
      </TaskItem>
      <TaskItem className="ml-[9px] w-[61px]" open>
        <svg viewBox="0 0 36 36" className="h-9 w-9">
          <defs>
            <linearGradient id="edgeTop" x1="0" y1="0.300" x2="1" y2="0.500">
              <stop offset="0" stopColor="#2fb4e8" />
              <stop offset=".55" stopColor="#33c6c0" />
              <stop offset="1" stopColor="#5fdc4e" />
            </linearGradient>
            <linearGradient id="edgeLeft" x1="0" y1="0" x2="0" y2="1">
              <stop offset="0" stopColor="#1478cc" />
              <stop offset="1" stopColor="#0a7fe0" />
            </linearGradient>
          </defs>
          <path d="M0 16C1 6 8 0 18 0c11 0 18 7 18 15 0 6-4 9-9 9-4 0-6-1.500-4.500-3.500C25 16 21 12 15 11 9 10 3 12 0 16z" fill="url(#edgeTop)" />
          <path d="M0 18c0-6 6-9.500 12-9 7 .500 11 5 11 9.500 0 0-1-4-5-4-3 0-5.500 3-5.500 7 0 7 5 12 11.500 13.500-2 .800-4 1-6 1C8 36 0 28 0 18z" fill="url(#edgeLeft)" />
          <path d="M10.500 23c0-5 3-9 7.500-8.500-4 5 0 13.500 8 14 3 0 5-.8 6.500-1.500 1-.3 1.300.2.800 1.200C30 33 26 35 23 35.500 16 36 10.500 30 10.500 23z" fill="#114a8b" />
        </svg>
      </TaskItem>
      <TaskItem className="ml-[14px] w-[61px]" open>
        <WeChat className="-mt-px h-[30px] w-9" />
      </TaskItem>
      <div className="ml-2 flex">
        <TaskItem className="w-[66px] bg-[#4c5252] *:first:pl-[6px]" open>
          <OfficeIcon letter="X" shades={["#33c481", "#21a366", "#107c41", "#185c37"]} badge="#107c41" />
        </TaskItem>
        <TaskItem className="w-[7px] border-l border-[#2c3232] bg-[#414747]" open>
          <span />
        </TaskItem>
      </div>
      <TaskItem className="ml-2 w-[61px] *:first:pr-px" open>
        <OfficeIcon letter="W" shades={["#41a5ee", "#2b7cd3", "#185abd", "#103f91"]} badge="#185abd" />
      </TaskItem>

      <svg viewBox="0 0 29 18" className="mt-[21px] ml-[733px] h-[18px] w-[29px]" fill="#fff">
        <path d="M0 0h15q5 0 5 5v13h-4V6q0-2.500-2.500-2.500H4V18H0zM8 7.500h4V18H8zM25 0h4v18h-4z" />
      </svg>
      <svg viewBox="0 0 18 11" className="mt-[23px] ml-6 h-[11px] w-[18px]" fill="none" stroke="#fff" strokeWidth="1.500">
        <path d="M.7 10L9 1.500l8.300 8.500" />
      </svg>
      <svg viewBox="0 0 24 20" className="mt-5 ml-[15px] h-5 w-6">
        <path d="M9 0C4 0 0 3.200 0 7.500c0 2.500 1.300 4.500 3.500 6L3 16.500l3-1.500c7 1.500 12-2.500 12-7.500S14 0 9 0z" fill="#2fdb6a" />
        <circle cx="6" cy="5" r="1.200" fill="#157a38" /><circle cx="12" cy="5" r="1.200" fill="#157a38" />
        <path d="M17 6.500c-4 0-7 2.700-7 6s3 6 7 6l2 0 3 1.300-.5-2.500C25 14 24 6.500 17 6.500z" fill="#efefef" />
        <circle cx="15" cy="11" r="1" fill="#777" /><circle cx="19.500" cy="11" r="1" fill="#777" />
      </svg>
      <svg viewBox="0 0 24 18" className="mt-[21px] ml-[12px] h-[18px] w-6" fill="none" stroke="#fff" strokeWidth="1.300">
        <path d="M2 0v3M6 0v3M.7 3.500h6.600v3q0 2-3.300 2t-3.300-2zM4 8.500v6h2" />
        <path d="M9 3.500h12.500v11H6V10M23.300 7v4" />
        <path d="M10 5.500h10v7.500H8v-3z" fill="#fff" stroke="none" />
      </svg>
      <svg viewBox="0 0 24 20" className="mt-5 ml-[12px] h-5 w-6" fill="none" stroke="#fff" strokeWidth="1.400">
        <path d="M1 6.500h3.500l5-5v17l-5-5H1z" />
        <path d="M13 7q2 3 0 6" />
        <path d="M16 4.500q4 5.500 0 11M19.500 2q6 8 0 16" stroke="#7e8282" />
      </svg>
      <svg viewBox="0 0 19 19" className="mt-[21px] ml-[16px] h-[19px] w-[19px]" fill="none" stroke="#fff" strokeWidth="1.400">
        <path d="M.8 18.500C1 8 8 1 18.500 1M5 18.500C5.500 11 10 6 18.500 5.500M9.500 18.500c.5-5 3.500-8 9-8.500" />
        <circle cx="16.500" cy="17" r="1.700" fill="#fff" stroke="none" />
      </svg>
      <svg viewBox="0 0 20 20" className="mt-[20px] ml-[21px] h-5 w-5" fill="none" stroke="#fff" strokeWidth="1.400">
        <path d="M6 10.500c-3-1-5.300 1-5.300 4 0 2.500 1.500 4 3.800 4 5 0 5.500-7 5.500-12M10 13L7 16l.8-4.500L14.500 1.500q2.500-1.500 3 1L11.500 12zM13 10.500c2-2 5-2 6-.5-.5 2.500-4 3.500-6.500 1.500" />
      </svg>
      <svg viewBox="0 0 204 56" className="mt-1 ml-[7px] h-14 w-[204px]">
        <path d="M18 8q7-7 18-8h115q14 1 22 8z" fill="#878a8a" />
        <path d="M3 32Q6 14 18 8h155q14 9 18 24v24H6z" fill="#262a2a" />
        <path d="M18 8h24v24H18z" fill="#434748" />
        <path d="M42 8h24v24H42z" fill="#1d2222" />
        <path d="M66 8h24v24H66z" fill="#2d3236" />
        <path d="M90 8h24v24H90z" fill="#2a2e2f" />
        <path d="M114 8h24v24h-24z" fill="#1b2021" />
        <path d="M18 32h24v24H18z" fill="#202423" />
        <path d="M42 32h24v24H42z" fill="#3c403f" />
        <path d="M66 32h24v24H66z" fill="#46494b" />
        <path d="M90 32h24v24H90z" fill="#383c3b" />
        <path d="M114 32h24v24h-24z" fill="#404446" />
        <path d="M138 32h53v24h-53z" fill="#23282a" />
        <path d="M184 14.500h11V33h-3" fill="none" stroke="#fff" strokeWidth="1.300" />
      </svg>
      <span className="absolute top-0 right-[6px] h-[60px] w-px bg-[#777]" />
    </div>
  );
}

/* ---------- Overlays ---------- */

function SideMeter() {
  const bars = Array.from({ length: 21 }, (_, i) => i);
  return (
    <svg viewBox="0 0 15 90" className="absolute top-[694px] right-0 h-[90px] w-[15px]">
      <path d="M15 .5H5Q.5 1 .5 6v78q0 5 4.500 5.500h10z" fill="#4f5567" stroke="#3a3f4c" />
      {bars.map((i) => (
        <rect
          key={i}
          x="6"
          y={11 + i * 3.3}
          width="7"
          height="2.2"
          fill={i < 10 ? "#2f3442" : `hsl(${62 + (i - 10) * 10} 50% 58%)`}
        />
      ))}
    </svg>
  );
}

function Watermark() {
  return (
    <svg
      viewBox="0 0 360 180"
      className="pointer-events-none absolute top-[870px] left-[1465px] h-[180px] w-[360px] drop-shadow-[0_0_1px_rgba(0,0,0,0.3)]"
      fill="#fff"
      fillOpacity=".92"
      stroke="#d8d8d8"
      strokeWidth="1.200"
    >
      <text x="6" y="113" fontSize="78" fontWeight="700" textLength="122" lengthAdjust="spacingAndGlyphs" fontFamily="Liberation Sans">Bai</text>
      <ellipse cx="140" cy="48" rx="13.500" ry="17" />
      <ellipse cx="164" cy="23.500" rx="12.500" ry="17.500" />
      <ellipse cx="195" cy="25.500" rx="13.500" ry="17" transform="rotate(10 195 25)" />
      <ellipse cx="214" cy="55" rx="13" ry="17" />
      <path d="M176 50c-14 0-17 14-27 23-9 8-15 14-15 24 0 12 9 18 19 17 9-1 14-2 23-2 10 0 16 2 24 2 12 0 20-7 20-18 0-12-9-17-17-25-9-9-13-21-27-21z" />
      <text x="147" y="103" fontSize="46" fontWeight="700" textLength="56" lengthAdjust="spacingAndGlyphs" fontFamily="Liberation Sans" stroke="#c4c4c4">du</text>
      <text x="229" y="107" fontSize="58" fontWeight="900" textLength="118" lengthAdjust="spacingAndGlyphs" fontFamily="Noto Sans CJK SC">经验</text>
      <text x="12" y="156" fontSize="37" fontWeight="600" textLength="338" lengthAdjust="spacingAndGlyphs" fontFamily="Open Sans" stroke="#c8c8c8" strokeWidth=".6">jingyan.baidu.com</text>
    </svg>
  );
}

export default function App() {
  return (
    <div className="relative flex h-[1080px] w-[1920px] flex-col overflow-hidden bg-[#e6e6e6] font-['Open_Sans','Noto_Sans_CJK_SC',sans-serif]">
      <header className="relative h-24 shrink-0 bg-[#217346]">
        <Circuit />
        <TitleBar />
        <TabStrip />
      </header>
      <Ribbon />
      <FormulaBar />
      <div className="flex h-[652px] shrink-0">
        <Sheet />
        <VerticalScroll />
      </div>
      <SheetTabs />
      <StatusBar />
      <Taskbar />
      <SideMeter />
      <Watermark />
    </div>
  );
}
